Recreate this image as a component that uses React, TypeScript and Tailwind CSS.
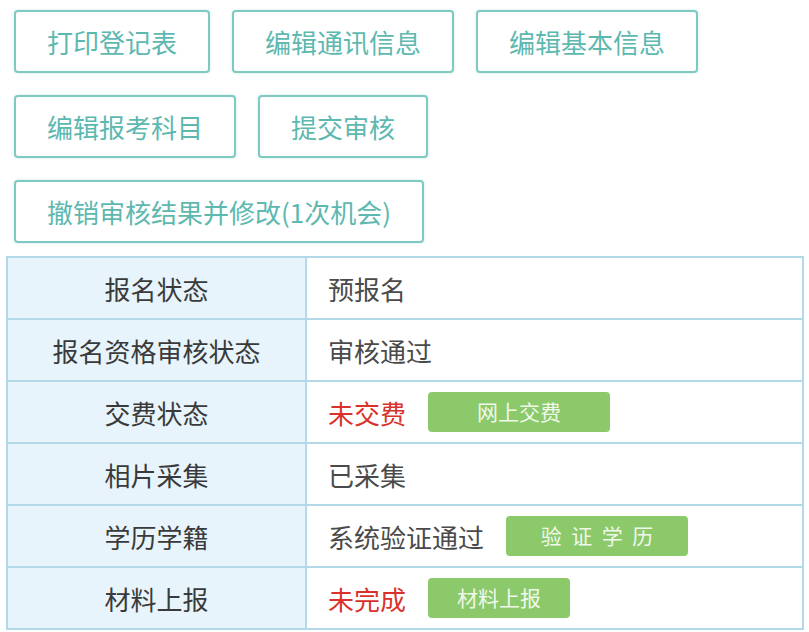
const font = { fontFamily: '"Noto Sans CJK SC", "Noto Sans", sans-serif' };

function OutlineButton({ label }: { label: string }) {
  return (
    <button className="flex h-[63px] items-center rounded-[4px] border-2 border-[#7ecac3] bg-white px-[31px] text-[26px] text-[#5db8b0] shadow-[0_0_3px_rgba(126,202,195,0.4)]">
      {label}
    </button>
  );
}

function GreenButton({ label, width, wide }: { label: string; width: string; wide?: boolean }) {
  return (
    <span
      className={`flex h-[40px] items-center justify-center rounded-[4px] bg-[#8bc96b] text-[21px] text-[#f0f8ea] ${width} ${
        wide ? "tracking-[0.45em] pl-[0.45em]" : ""
      }`}
    >
      {label}
    </span>
  );
}

const rows: { label: string; value: React.ReactNode }[] = [
  { label: "报名状态", value: <span>预报名</span> },
  { label: "报名资格审核状态", value: <span>审核通过</span> },
  {
    label: "交费状态",
    value: (
      <>
        <span className="text-[#d8322a]">未交费</span>
        <GreenButton label="网上交费" width="w-[182px]" />
      </>
    ),
  },
  { label: "相片采集", value: <span>已采集</span> },
  {
    label: "学历学籍",
    value: (
      <>
        <span>系统验证通过</span>
        <GreenButton label="验证学历" width="w-[182px]" wide />
      </>
    ),
  },
  {
    label: "材料上报",
    value: (
      <>
        <span className="text-[#d8322a]">未完成</span>
        <GreenButton label="材料上报" width="w-[142px]" />
      </>
    ),
  },
];

export default function App() {
  return (
    <div className="h-[632px] w-[809px] overflow-hidden bg-white" style={font}>
      <div className="flex flex-col gap-[22px] px-[14px] pt-[10px]">
        <div className="flex gap-[22px]">
          <OutlineButton label="打印登记表" />
          <OutlineButton label="编辑通讯信息" />
          <OutlineButton label="编辑基本信息" />
        </div>
        <div className="flex gap-[22px]">
          <OutlineButton label="编辑报考科目" />
          <OutlineButton label="提交审核" />
        </div>
        <div className="flex">
          <OutlineButton label="撤销审核结果并修改(1次机会)" />
        </div>
      </div>

      <div className="mx-[6px] mt-[13px] w-[798px] border-2 border-[#b3d8e8]">
        {rows.map((row, i) => (
          <div
            key={row.label}
            className={`flex text-[26px] text-[#3a3a3a] ${i > 0 ? "h-[62px] border-t-2 border-[#b3d8e8]" : "h-[60px]"}`}
          >
            <div className="flex w-[299px] shrink-0 items-center justify-center border-r-2 border-[#b3d8e8] bg-[#e7f4fc]">
              {row.label}
            </div>
            <div className="flex flex-1 items-center gap-[22px] pl-[21px] text-[#4a4a4a]">{row.value}</div>
          </div>
        ))}
      </div>
    </div>
  );
}
